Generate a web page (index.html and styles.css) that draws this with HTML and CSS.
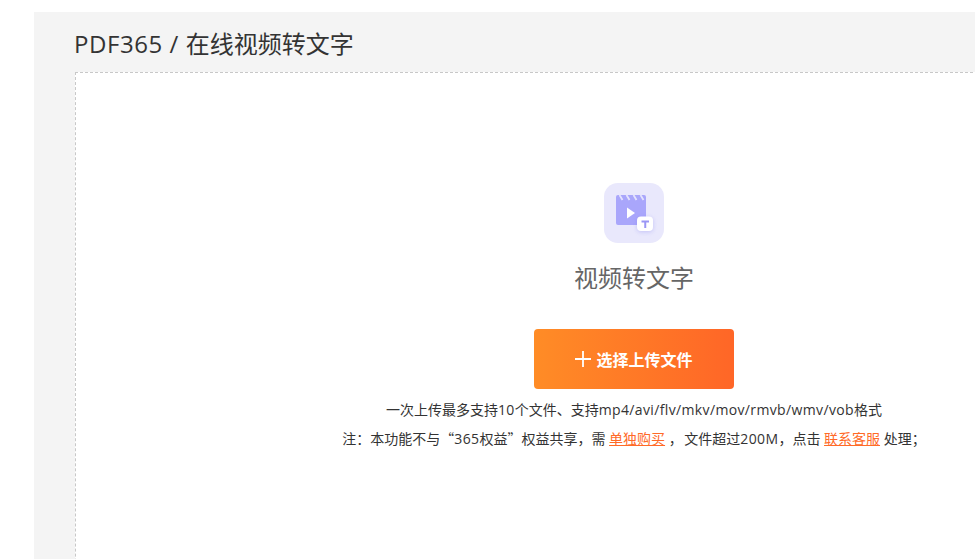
FILE: index.html
```html
<!DOCTYPE html>
<html lang="zh-CN">
  <head>
    <meta charset="UTF-8" />
    <title>在线视频转文字</title>
    <link rel="stylesheet" href="styles.css">
  </head>
  <body>
    <div class="panel">
      <h1 class="crumb"><span class="crumb-latin">PDF365 / </span>在线视频转文字</h1>
      <div class="upload-box">
        <div class="tool-icon">
          <svg width="60" height="60" viewBox="0 0 60 60">
            <path d="M12 14a2 2 0 0 1 2-2h26a2 2 0 0 1 2 2v26a2 2 0 0 1-2 2H14a2 2 0 0 1-2-2z" fill="#a9a6fb"/>
            <path d="M15.500 12l3 5M22.500 12l3 5M29.500 12l3 5M36.500 12l3 5" stroke="#e4e3fd" stroke-width="1.800"/>
            <path d="M23 24.500l8 5.500-8 5.500z" fill="#fff"/>
            <rect class="badge" x="33" y="33.500" width="16" height="14.500" rx="4" fill="#fff"/>
            <path d="M37.500 37.500h7.500v2h-2.750v5.500h-2v-5.500h-2.750z" fill="#9a96f5"/>
          </svg>
        </div>
        <div class="tool-name">视频转文字</div>
        <button class="upload-btn">
          <svg width="16" height="16" viewBox="0 0 16 16">
            <path d="M8 0v16M0 8h16" stroke="#fff" stroke-width="1.800"/>
          </svg>
          选择上传文件
        </button>
        <p class="tip tip-first">一次上传最多支持<span class="latin">10</span>个文件、支持<span class="latin">mp4/avi/flv/mkv/mov/rmvb/wmv/vob</span>格式</p>
        <p class="tip">注：本功能不与<span class="quote">“</span><span class="latin">365</span>权益<span class="quote">”</span>权益共享，需 <a href="#">单独购买</a> <span class="comma">，</span> 文件超过<span class="latin">200M</span>，点击 <a href="#">联系客服</a> 处理；</p>
      </div>
    </div>
  </body>
</html>
```

FILE: styles.css
```css
html,
body {
  height: 100%;
  overflow: hidden;
}

body {
  margin: 0;
  background-color: #fff;
  font-family: "Open Sans", "Noto Sans CJK SC", sans-serif;
  padding: 12px 0 0 34px;
  box-sizing: border-box;
}

.panel {
  background-color: #f4f4f4;
  padding: 0 0 0 40px;
  width: 1200px;
  height: 100%;
}

.crumb {
  margin: 0;
  font-size: 24px;
  font-weight: 400;
  line-height: 60px;
  padding-top: 2px;
  height: 58px;
  color: #333;
}

.crumb-latin {
  letter-spacing: 0.55px;
}

.upload-box {
  box-sizing: border-box;
  width: 1118px;
  height: 600px;
  margin-left: 1px;
  background-color: #fff;
  border: 1px dashed #c8c8c8;
  display: flex;
  flex-direction: column;
  align-items: center;
  padding-top: 110px;
}

.tool-icon {
  width: 60px;
  height: 60px;
  background-color: #e9e8fc;
  border-radius: 14px;
}

.badge {
  filter: drop-shadow(0 1px 2px rgba(130, 125, 240, 0.35));
}

.tool-name {
  font-size: 24px;
  line-height: 36px;
  color: #666;
  margin-top: 17px;
}

.upload-btn {
  width: 200px;
  height: 60px;
  margin-top: 33px;
  border: none;
  border-radius: 4px;
  background: linear-gradient(90deg, #ff8c26, #ff6627);
  color: #fff;
  font-family: inherit;
  font-size: 16px;
  font-weight: 700;
  display: flex;
  align-items: center;
  justify-content: center;
  gap: 5px;
}

.tip {
  margin: 0;
  font-size: 14px;
  line-height: 28px;
  color: #333;
  white-space: nowrap;
}

.tip-first {
  margin-top: 7px;
}

.tip a {
  color: #ff6a27;
}

.latin {
  letter-spacing: 0.36px;
}

.comma {
  letter-spacing: -2px;
}

.quote {
  font-family: "Noto Sans CJK SC", sans-serif;
  display: inline-block;
  width: 14px;
}
```
